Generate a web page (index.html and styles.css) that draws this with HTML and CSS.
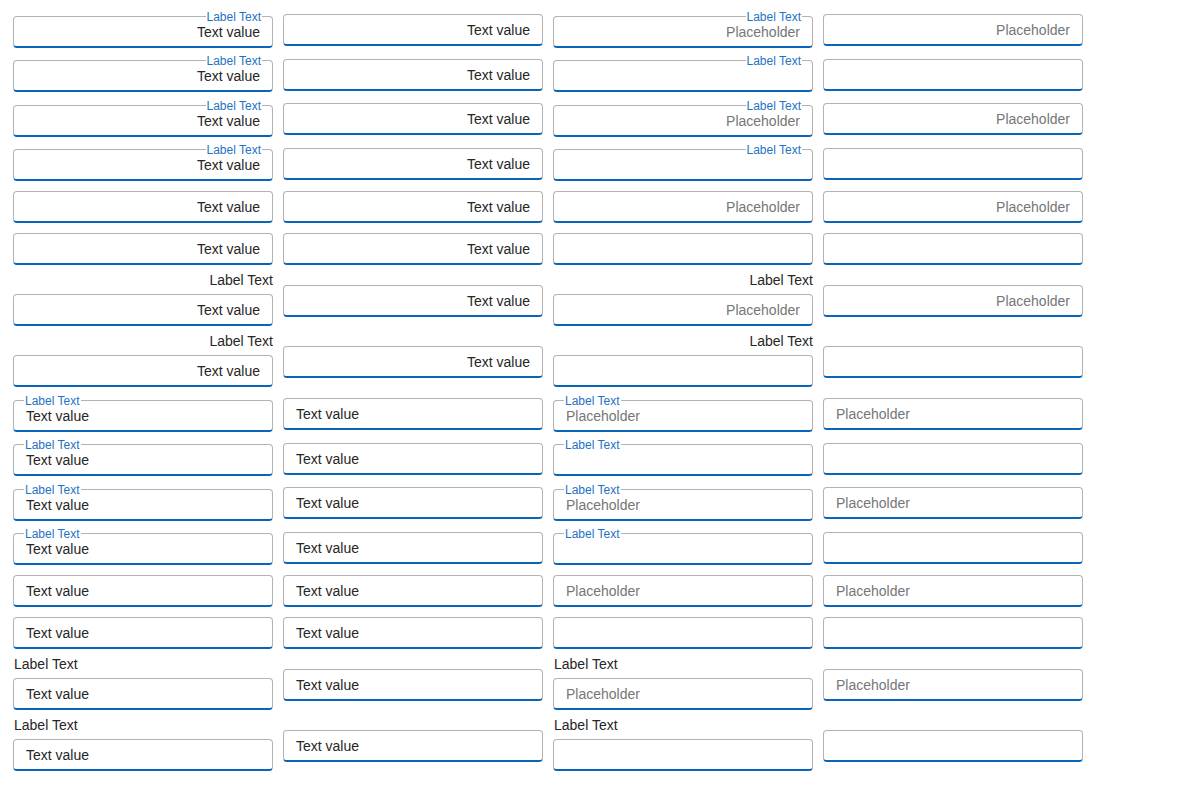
FILE: index.html
```html
<!DOCTYPE html>
<html lang="en">
<head>
<meta charset="utf-8">
<title>Input fields</title>
<link rel="stylesheet" href="styles.css">
</head>
<body>
<div class="form-grid align-end">
  <div class="field fl"><div class="box"><span class="flabel">Label Text</span><span class="val">Text value</span></div></div>
  <div class="field"><div class="box"><span class="val">Text value</span></div></div>
  <div class="field fl"><div class="box"><span class="flabel">Label Text</span><span class="ph">Placeholder</span></div></div>
  <div class="field"><div class="box"><span class="ph">Placeholder</span></div></div>

  <div class="field fl"><div class="box"><span class="flabel">Label Text</span><span class="val">Text value</span></div></div>
  <div class="field"><div class="box"><span class="val">Text value</span></div></div>
  <div class="field fl"><div class="box"><span class="flabel">Label Text</span></div></div>
  <div class="field"><div class="box"></div></div>

  <div class="field fl"><div class="box"><span class="flabel">Label Text</span><span class="val">Text value</span></div></div>
  <div class="field"><div class="box"><span class="val">Text value</span></div></div>
  <div class="field fl"><div class="box"><span class="flabel">Label Text</span><span class="ph">Placeholder</span></div></div>
  <div class="field"><div class="box"><span class="ph">Placeholder</span></div></div>

  <div class="field fl"><div class="box"><span class="flabel">Label Text</span><span class="val">Text value</span></div></div>
  <div class="field"><div class="box"><span class="val">Text value</span></div></div>
  <div class="field fl"><div class="box"><span class="flabel">Label Text</span></div></div>
  <div class="field"><div class="box"></div></div>

  <div class="field"><div class="box"><span class="val">Text value</span></div></div>
  <div class="field"><div class="box"><span class="val">Text value</span></div></div>
  <div class="field"><div class="box"><span class="ph">Placeholder</span></div></div>
  <div class="field"><div class="box"><span class="ph">Placeholder</span></div></div>

  <div class="field"><div class="box"><span class="val">Text value</span></div></div>
  <div class="field"><div class="box"><span class="val">Text value</span></div></div>
  <div class="field"><div class="box"></div></div>
  <div class="field"><div class="box"></div></div>

  <div class="field above"><label class="alabel">Label Text</label><div class="box"><span class="val">Text value</span></div></div>
  <div class="field"><div class="box"><span class="val">Text value</span></div></div>
  <div class="field above"><label class="alabel">Label Text</label><div class="box"><span class="ph">Placeholder</span></div></div>
  <div class="field"><div class="box"><span class="ph">Placeholder</span></div></div>

  <div class="field above"><label class="alabel">Label Text</label><div class="box"><span class="val">Text value</span></div></div>
  <div class="field"><div class="box"><span class="val">Text value</span></div></div>
  <div class="field above"><label class="alabel">Label Text</label><div class="box"></div></div>
  <div class="field"><div class="box"></div></div>
</div>

<div class="form-grid align-start">
  <div class="field fl"><div class="box"><span class="flabel">Label Text</span><span class="val">Text value</span></div></div>
  <div class="field"><div class="box"><span class="val">Text value</span></div></div>
  <div class="field fl"><div class="box"><span class="flabel">Label Text</span><span class="ph">Placeholder</span></div></div>
  <div class="field"><div class="box"><span class="ph">Placeholder</span></div></div>

  <div class="field fl"><div class="box"><span class="flabel">Label Text</span><span class="val">Text value</span></div></div>
  <div class="field"><div class="box"><span class="val">Text value</span></div></div>
  <div class="field fl"><div class="box"><span class="flabel">Label Text</span></div></div>
  <div class="field"><div class="box"></div></div>

  <div class="field fl"><div class="box"><span class="flabel">Label Text</span><span class="val">Text value</span></div></div>
  <div class="field"><div class="box"><span class="val">Text value</span></div></div>
  <div class="field fl"><div class="box"><span class="flabel">Label Text</span><span class="ph">Placeholder</span></div></div>
  <div class="field"><div class="box"><span class="ph">Placeholder</span></div></div>

  <div class="field fl"><div class="box"><span class="flabel">Label Text</span><span class="val">Text value</span></div></div>
  <div class="field"><div class="box"><span class="val">Text value</span></div></div>
  <div class="field fl"><div class="box"><span class="flabel">Label Text</span></div></div>
  <div class="field"><div class="box"></div></div>

  <div class="field"><div class="box"><span class="val">Text value</span></div></div>
  <div class="field"><div class="box"><span class="val">Text value</span></div></div>
  <div class="field"><div class="box"><span class="ph">Placeholder</span></div></div>
  <div class="field"><div class="box"><span class="ph">Placeholder</span></div></div>

  <div class="field"><div class="box"><span class="val">Text value</span></div></div>
  <div class="field"><div class="box"><span class="val">Text value</span></div></div>
  <div class="field"><div class="box"></div></div>
  <div class="field"><div class="box"></div></div>

  <div class="field above"><label class="alabel">Label Text</label><div class="box"><span class="val">Text value</span></div></div>
  <div class="field"><div class="box"><span class="val">Text value</span></div></div>
  <div class="field above"><label class="alabel">Label Text</label><div class="box"><span class="ph">Placeholder</span></div></div>
  <div class="field"><div class="box"><span class="ph">Placeholder</span></div></div>

  <div class="field above"><label class="alabel">Label Text</label><div class="box"><span class="val">Text value</span></div></div>
  <div class="field"><div class="box"><span class="val">Text value</span></div></div>
  <div class="field above"><label class="alabel">Label Text</label><div class="box"></div></div>
  <div class="field"><div class="box"></div></div>
</div>
</body>
</html>
```

FILE: styles.css
```css
html, body {
  background: #ffffff;
}
body {
  margin: 8px;
  font-family: "Liberation Sans", Arial, sans-serif;
  font-size: 14px;
  color: #2b2b2b;
}
.form-grid {
  display: grid;
  grid-template-columns: repeat(4, 260px);
  column-gap: 10px;
  row-gap: 10px;
  align-items: center;
  padding: 5px;
}
.field {
  display: flex;
  flex-direction: column;
}
.field.fl {
  padding-top: 2.5px;
}
.box {
  position: relative;
  box-sizing: border-box;
  height: 32px;
  border: 1px solid #b3b3b3;
  border-bottom: 2px solid #0a64b8;
  border-radius: 4px;
  background: #ffffff;
  padding: 1px 12px 0;
  display: flex;
  align-items: center;
  line-height: 20px;
}
.align-end .box {
  justify-content: flex-end;
}
.align-start .box {
  justify-content: flex-start;
}
.val {
  color: #262626;
}
.ph {
  color: #767676;
}
.flabel {
  position: absolute;
  top: -7px;
  font-size: 12px;
  line-height: 14px;
  padding: 0 1px;
  background: #ffffff;
  color: #1f72c4;
}
.align-end .flabel {
  right: 10px;
}
.align-start .flabel {
  left: 10px;
}
.alabel {
  display: block;
  box-sizing: border-box;
  height: 19px;
  line-height: 10px;
  color: #262626;
}
.align-end .alabel {
  text-align: right;
}
.align-start .alabel {
  text-align: left;
  padding-left: 1px;
}
```
